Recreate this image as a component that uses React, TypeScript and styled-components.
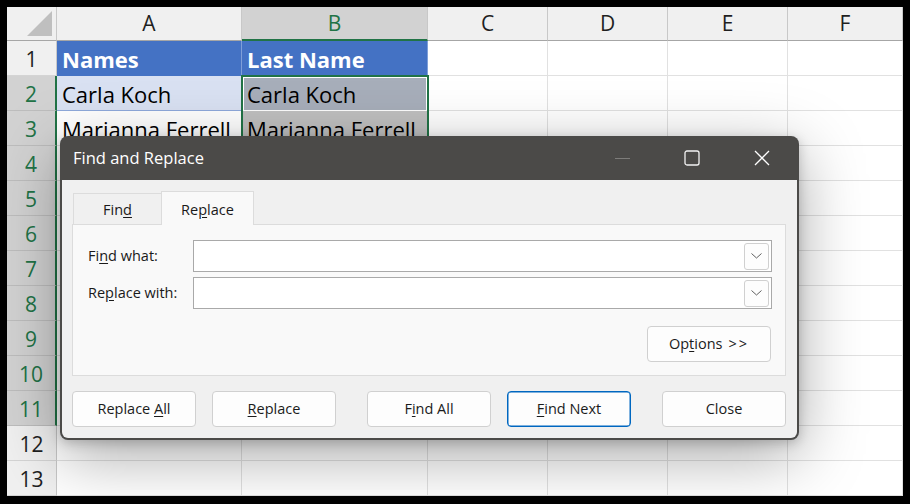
import React from 'react';
import styled, { createGlobalStyle, css } from 'styled-components';

const GlobalStyle = createGlobalStyle`
  html, body { margin: 0; padding: 0; background: #000; }
  body { font-family: "Open Sans", "Noto Sans", sans-serif; }
  * { box-sizing: border-box; }
`;

const GREEN = '#217346';

const Frame = styled.div`
  width: 910px;
  height: 504px;
  padding: 7px;
  background: #000;
  overflow: hidden;
`;

const Sheet = styled.div`
  position: relative;
  width: 896px;
  height: 489px;
  display: grid;
  grid-template-columns: 50px 185px 186px 120px 120px 120px 115px;
  grid-template-rows: 34px repeat(13, 35px);
  background: #fff;
  overflow: hidden;
  font-family: "Open Sans", "Noto Sans", sans-serif;
`;

const Corner = styled.div`
  position: relative;
  background: #f0f0f0;
  border-right: 1px solid #c8c8c8;
  border-bottom: 1px solid #a6a6a6;
  &::after {
    content: '';
    position: absolute;
    right: 4px;
    bottom: 4px;
    width: 0;
    height: 0;
    border-left: 25px solid transparent;
    border-bottom: 25px solid #bfbfbf;
  }
`;

const ColHeader = styled.div<{ $sel?: boolean }>`
  display: flex;
  align-items: center;
  justify-content: center;
  font-size: 21px;
  padding-bottom: 1px;
  background: ${(p) => (p.$sel ? '#d2d2d2' : '#f0f0f0')};
  color: ${(p) => (p.$sel ? GREEN : '#1f1f1f')};
  border-right: 1px solid #c8c8c8;
  border-bottom: ${(p) => (p.$sel ? `2px solid ${GREEN}` : '1px solid #a6a6a6')};
`;

const RowHeader = styled.div<{ $sel?: boolean }>`
  display: flex;
  align-items: center;
  justify-content: center;
  font-size: 21px;
  padding-top: 1px;
  background: ${(p) => (p.$sel ? '#d2d2d2' : '#f0f0f0')};
  color: ${(p) => (p.$sel ? GREEN : '#1f1f1f')};
  border-bottom: 1px solid ${(p) => (p.$sel ? '#bdbdbd' : '#d4d4d4')};
  border-right: ${(p) => (p.$sel ? `2px solid ${GREEN}` : '1px solid #c8c8c8')};
`;

type Tone = 'head' | 'band' | 'bandSel' | 'sel' | 'plain';

const toneStyles: Record<Tone, ReturnType<typeof css>> = {
  head: css`
    background: #4472c4;
    color: #fff;
    font-weight: 700;
    border-right-color: #7f9fd8;
    border-bottom-color: #4472c4;
  `,
  band: css`
    background: #d9e1f2;
    border-right-color: #d9e1f2;
    border-bottom-color: #8ea9db;
  `,
  bandSel: css`
    background: #a7aeba;
    border-bottom-color: #8590a3;
  `,
  sel: css`
    background: #c0c0c0;
    border-bottom-color: #b0b0b0;
  `,
  plain: css``,
};

const Cell = styled.div<{ $tone: Tone }>`
  display: flex;
  align-items: center;
  padding: 2px 0 0 5px;
  font-size: 22px;
  color: #000;
  white-space: nowrap;
  overflow: hidden;
  border-right: 1px solid #e1e1e1;
  border-bottom: 1px solid #e1e1e1;
  ${(p) => toneStyles[p.$tone]}
`;

const Range = styled.div`
  position: absolute;
  grid-column: 3 / 4;
  grid-row: 3 / 13;
  top: -1px;
  left: -1px;
  right: -1px;
  bottom: -1px;
  border: 2px solid ${GREEN};
  pointer-events: none;
  z-index: 1;
`;

const ActiveCell = styled.div`
  position: absolute;
  grid-column: 3 / 4;
  grid-row: 3 / 4;
  top: 1px;
  left: 1px;
  right: 1px;
  bottom: 0;
  border: 1px solid #fff;
  pointer-events: none;
  z-index: 1;
`;

/* ---------- dialog ---------- */

const Dialog = styled.div`
  position: absolute;
  left: 53px;
  top: 129px;
  width: 739px;
  height: 304px;
  z-index: 5;
  display: flex;
  flex-direction: column;
  padding: 0 2px 2px;
  background: #4b4a48;
  border-radius: 8px;
  box-shadow: 0 16px 64px rgba(0, 0, 0, 0.34), 0 3px 12px rgba(0, 0, 0, 0.2);
  font-family: "Open Sans", "Noto Sans", sans-serif;
  color: #1a1a1a;
`;

const TitleBar = styled.div`
  height: 44px;
  margin: 0 -2px;
  padding: 0 2px 0 13px;
  display: flex;
  align-items: center;
`;

const Title = styled.div`
  flex: 1;
  color: #fff;
  font-size: 16.5px;
  padding-bottom: 1px;
`;

const WinButton = styled.div`
  width: 70px;
  height: 44px;
  display: flex;
  align-items: center;
  justify-content: center;
`;

const MinLine = styled.div`
  width: 15px;
  height: 1px;
  background: #7d7c7a;
`;

const Body = styled.div`
  flex: 1;
  background: #f0f0f0;
  border-radius: 0 0 6px 6px;
  padding: 11px 11px 0 10px;
  display: flex;
  flex-direction: column;
`;

const Tabs = styled.div`
  height: 33px;
  display: flex;
  align-items: flex-end;
  padding-left: 1px;
`;

const Tab = styled.div<{ $active?: boolean }>`
  display: flex;
  align-items: center;
  justify-content: center;
  font-size: 14.5px;
  padding-top: 1px;
  border: 1px solid #dcdcdc;
  border-bottom: none;
  ${(p) =>
    p.$active
      ? css`
          width: 93px;
          height: 34px;
          margin-bottom: -1px;
          background: #f9f9f9;
          position: relative;
          z-index: 1;
        `
      : css`
          width: 88px;
          height: 31px;
          background: #f0f0f0;
          border-right: none;
        `}
`;

const Panel = styled.div`
  height: 152px;
  background: #f9f9f9;
  border: 1px solid #dcdcdc;
  padding: 15px 13px 0 15px;
  display: flex;
  flex-direction: column;
  gap: 5px;
`;

const FieldRow = styled.div`
  height: 32px;
  display: grid;
  grid-template-columns: 105px 1fr;
  align-items: center;
`;

const Label = styled.div`
  font-size: 14.5px;
  padding-bottom: 1px;
`;

const Combo = styled.div`
  height: 100%;
  background: #fff;
  border: 1px solid #a9a9a9;
  display: flex;
  align-items: center;
  justify-content: flex-end;
  padding-right: 2px;
`;

const DropButton = styled.div`
  width: 25px;
  height: 27px;
  border: 1px solid #d0d0d0;
  border-radius: 3px;
  background: #fdfdfd;
  display: flex;
  align-items: center;
  justify-content: center;
`;

const OptionsRow = styled.div`
  margin-top: 12px;
  display: flex;
  justify-content: flex-end;
  padding-right: 1px;
`;

const Button = styled.div<{ $primary?: boolean }>`
  width: 124px;
  height: 36px;
  display: flex;
  align-items: center;
  justify-content: center;
  font-size: 14.5px;
  padding-bottom: 1px;
  color: #1b1b1b;
  background: #fdfdfd;
  border: 1px solid ${(p) => (p.$primary ? '#0067c0' : '#d0d0d0')};
  border-radius: 4px;
  ${(p) => p.$primary && css`box-shadow: inset 0 0 0 0.5px #0067c0;`}
`;

const ButtonsRow = styled.div`
  margin-top: 15px;
  display: flex;
  gap: 31px;
`;

const ButtonGroup = styled.div`
  display: flex;
  gap: 16px;
`;

const Key = styled.span`
  text-decoration: underline;
  text-decoration-thickness: 1px;
  text-underline-offset: 2px;
`;

const Arrows = styled.span`
  margin-left: 6px;
  letter-spacing: 2px;
`;

const Chevron = () => (
  <svg width="11" height="6" viewBox="0 0 11 6" fill="none">
    <path d="M0.5 0.5 L5.5 5 L10.5 0.5" stroke="#5f5f5f" strokeWidth="1" />
  </svg>
);

const MaxIcon = () => (
  <svg width="16" height="16" viewBox="0 0 16 16" fill="none">
    <rect x="1" y="1" width="14" height="14" rx="2" stroke="#f2f2f2" strokeWidth="1.3" />
  </svg>
);

const CloseIcon = () => (
  <svg width="16" height="16" viewBox="0 0 16 16" fill="none">
    <path d="M1 1 L15 15 M15 1 L1 15" stroke="#ffffff" strokeWidth="1.3" />
  </svg>
);

const columns = ['A', 'B', 'C', 'D', 'E', 'F'];

const data: Record<number, [string, string]> = {
  1: ['Names', 'Last Name'],
  2: ['Carla Koch', 'Carla Koch'],
  3: ['Marianna Ferrell', 'Marianna Ferrell'],
};

function toneFor(row: number, col: number): Tone {
  if (col === 0) {
    if (row === 1) return 'head';
    if (row === 2) return 'band';
    return 'plain';
  }
  if (col === 1) {
    if (row === 1) return 'head';
    if (row === 2) return 'bandSel';
    if (row >= 3 && row <= 11) return 'sel';
    return 'plain';
  }
  return 'plain';
}

export default function App() {
  const rows = Array.from({ length: 13 }, (_, i) => i + 1);
  return (
    <>
      <GlobalStyle />
      <Frame>
        <Sheet>
          <Corner />
          {columns.map((c) => (
            <ColHeader key={c} $sel={c === 'B'}>
              {c}
            </ColHeader>
          ))}
          {rows.map((r) => (
            <React.Fragment key={r}>
              <RowHeader $sel={r >= 2 && r <= 11}>{r}</RowHeader>
              {columns.map((c, ci) => (
                <Cell key={c} $tone={toneFor(r, ci)}>
                  {ci < 2 && data[r] ? data[r][ci] : ''}
                </Cell>
              ))}
            </React.Fragment>
          ))}
          <Range />
          <ActiveCell />

          <Dialog>
            <TitleBar>
              <Title>Find and Replace</Title>
              <WinButton>
                <MinLine />
              </WinButton>
              <WinButton>
                <MaxIcon />
              </WinButton>
              <WinButton>
                <CloseIcon />
              </WinButton>
            </TitleBar>
            <Body>
              <Tabs>
                <Tab>
                  <span>
                    Fin<Key>d</Key>
                  </span>
                </Tab>
                <Tab $active>
                  <span>
                    Re<Key>p</Key>lace
                  </span>
                </Tab>
              </Tabs>
              <Panel>
                <FieldRow>
                  <Label>
                    Fi<Key>n</Key>d what:
                  </Label>
                  <Combo>
                    <DropButton>
                      <Chevron />
                    </DropButton>
                  </Combo>
                </FieldRow>
                <FieldRow>
                  <Label>
                    Re<Key>p</Key>lace with:
                  </Label>
                  <Combo>
                    <DropButton>
                      <Chevron />
                    </DropButton>
                  </Combo>
                </FieldRow>
                <OptionsRow>
                  <Button>
                    <span>
                      Op<Key>t</Key>ions<Arrows>&gt;&gt;</Arrows>
                    </span>
                  </Button>
                </OptionsRow>
              </Panel>
              <ButtonsRow>
                <ButtonGroup>
                  <Button>
                    <span>
                      Replace <Key>A</Key>ll
                    </span>
                  </Button>
                  <Button>
                    <span>
                      <Key>R</Key>eplace
                    </span>
                  </Button>
                </ButtonGroup>
                <ButtonGroup>
                  <Button>
                    <span>
                      F<Key>i</Key>nd All
                    </span>
                  </Button>
                  <Button $primary>
                    <span>
                      <Key>F</Key>ind Next
                    </span>
                  </Button>
                </ButtonGroup>
                <Button>Close</Button>
              </ButtonsRow>
            </Body>
          </Dialog>
        </Sheet>
      </Frame>
    </>
  );
}
